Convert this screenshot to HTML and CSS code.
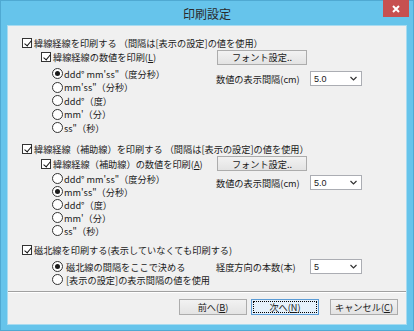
FILE: index.html
```html
<!DOCTYPE html>
<html lang="ja">
<head>
    <meta charset="UTF-8">
    <title>印刷設定</title>
    <link rel="stylesheet" href="styles.css">
</head>
<body>
<div class="window">
    <div class="titlebar">
        <span class="title">印刷設定</span>
        <span class="close">
            <svg width="8" height="8" viewBox="0 0 8 8"><path d="M1 1L7 7M7 1L1 7" stroke="#fff" stroke-width="2"/></svg>
        </span>
    </div>
    <div class="client">
        <!-- 緯線経線 -->
        <div class="group g1">
            <div class="row top"><span class="chk on"></span><span>緯線経線を印刷する （間隔は[表示の設定]の値を使用）</span></div>
            <div class="row sub">
                <div class="sub-label"><span class="chk on"></span><span>緯線経線の数値を印刷(<u>L</u>)</span></div>
                <span class="btn">フォント設定..</span>
            </div>
            <div class="body">
                <div class="radios">
                    <div class="opt"><span class="radio on"></span>ddd° mm'ss"（度分秒）</div>
                    <div class="opt"><span class="radio"></span>mm'ss"（分秒）</div>
                    <div class="opt"><span class="radio"></span>ddd°（度）</div>
                    <div class="opt"><span class="radio"></span>mm'（分）</div>
                    <div class="opt"><span class="radio"></span>ss"（秒）</div>
                </div>
                <div class="field">
                    <span class="field-label">数値の表示間隔(cm)</span>
                    <span class="select">5.0<svg width="7" height="5" viewBox="0 0 7 5"><polyline points="0.5,1 3.5,4 6.5,1" fill="none" stroke="#333" stroke-width="1.2"/></svg></span>
                </div>
            </div>
        </div>
        <!-- 補助線 -->
        <div class="group g2">
            <div class="row top"><span class="chk on"></span><span>緯線経線（補助線）を印刷する （間隔は[表示の設定]の値を使用）</span></div>
            <div class="row sub">
                <div class="sub-label"><span class="chk on"></span><span>緯線経線（補助線）の数値を印刷(<u>A</u>)</span></div>
                <span class="btn">フォント設定..</span>
            </div>
            <div class="body">
                <div class="radios">
                    <div class="opt"><span class="radio"></span>ddd° mm'ss"（度分秒）</div>
                    <div class="opt"><span class="radio on"></span>mm'ss"（分秒）</div>
                    <div class="opt"><span class="radio"></span>ddd°（度）</div>
                    <div class="opt"><span class="radio"></span>mm'（分）</div>
                    <div class="opt"><span class="radio"></span>ss"（秒）</div>
                </div>
                <div class="field">
                    <span class="field-label">数値の表示間隔(cm)</span>
                    <span class="select">5.0<svg width="7" height="5" viewBox="0 0 7 5"><polyline points="0.5,1 3.5,4 6.5,1" fill="none" stroke="#333" stroke-width="1.2"/></svg></span>
                </div>
            </div>
        </div>
        <!-- 磁北線 -->
        <div class="group g3">
            <div class="row top"><span class="chk on"></span><span>磁北線を印刷する(表示していなくても印刷する)</span></div>
            <div class="body">
                <div class="radios">
                    <div class="opt"><span class="radio on"></span>磁北線の間隔をここで決める</div>
                    <div class="opt"><span class="radio"></span>[表示の設定]の表示間隔の値を使用</div>
                </div>
                <div class="field">
                    <span class="field-label">経度方向の本数(本)</span>
                    <span class="select">5<svg width="7" height="5" viewBox="0 0 7 5"><polyline points="0.5,1 3.5,4 6.5,1" fill="none" stroke="#333" stroke-width="1.2"/></svg></span>
                </div>
            </div>
        </div>
        <div class="sep"></div>
        <div class="buttons">
            <span class="btn wide">前へ(<u>B</u>)</span>
            <span class="btn wide default"><span class="focus">次へ(<u>N</u>)</span></span>
            <span class="btn wide cancel">キャンセル(<u>C</u>)</span>
        </div>
    </div>
</div>
</body>
</html>
```

FILE: styles.css
```css
* {
    margin: 0;
    padding: 0;
    box-sizing: border-box;
}

body {
    width: 414px;
    height: 331px;
    overflow: hidden;
    font-family: "Noto Sans CJK JP", sans-serif;
    font-size: 9.2px;
    line-height: 12px;
    color: #1a1a1a;
}

.window {
    width: 414px;
    height: 331px;
    background: #66c4eb;
    border: 1px solid #4fa9d2;
    display: flex;
    flex-direction: column;
}

.titlebar {
    height: 25px;
    display: grid;
    grid-template-columns: 1fr auto 1fr;
}

.title {
    grid-column: 2;
    font-size: 12px;
    line-height: 26px;
    color: #2a2a2a;
}

.close {
    grid-column: 3;
    justify-self: end;
    align-self: start;
    width: 26px;
    height: 17px;
    margin-top: -1px;
    margin-right: 4px;
    background: #c75050;
    display: flex;
    align-items: center;
    justify-content: center;
}

.client {
    margin: 0 7px;
    height: 298px;
    background: #f0f0f0;
    box-shadow: 0 0 0 1px #a8dbf0;
    padding-top: 10px;
}

.row {
    display: flex;
    align-items: center;
}

.top {
    height: 14px;
    padding-left: 14px;
}

.sub {
    height: 14px;
}

.sub-label {
    width: 208px;
    padding-left: 33px;
    display: flex;
    align-items: center;
}

.chk {
    width: 10px;
    height: 10px;
    margin-right: 2px;
    flex: none;
    border: 1px solid #333;
    background: #fff;
    position: relative;
}

.chk.on::after {
    content: "";
    position: absolute;
    left: 2.5px;
    top: 0;
    width: 3px;
    height: 6px;
    border: solid #111;
    border-width: 0 1.6px 1.6px 0;
    transform: rotate(40deg);
}

.btn {
    display: flex;
    align-items: center;
    justify-content: center;
    width: 90px;
    height: 15px;
    margin-left: 1px;
    background: linear-gradient(#f2f2f2, #e3e3e3);
    border: 1px solid #acacac;
}

.body {
    display: flex;
    margin-top: 3px;
}

.radios {
    width: 208px;
    padding-left: 44px;
}

.opt {
    height: 13.5px;
    display: flex;
    align-items: center;
    white-space: nowrap;
}

.radio {
    width: 11px;
    height: 11px;
    margin-right: 1px;
    flex: none;
    border: 1px solid #333;
    border-radius: 50%;
    background: #fff;
    display: flex;
    align-items: center;
    justify-content: center;
}

.radio.on::after {
    content: "";
    width: 5px;
    height: 5px;
    border-radius: 50%;
    background: #1a1a1a;
}

.field {
    display: flex;
    align-items: center;
    height: 15px;
    margin-top: 4px;
}

.field-label {
    width: 94px;
}

.select {
    width: 52px;
    height: 15px;
    flex: none;
    display: flex;
    align-items: center;
    justify-content: space-between;
    padding: 0 4px 0 3px;
    background: #fff;
    border: 1px solid #abadb3;
    font-family: "Liberation Sans", sans-serif;
    font-size: 9px;
}

.g2 {
    margin-top: 7.5px;
}

.g2 .sub {
    height: 15px;
}

.g2 .body {
    margin-top: 1px;
}

.g2 .opt {
    height: 13px;
}

.g2 .field {
    margin-top: 3px;
}

.g3 {
    margin-top: 6px;
}

.g3 .opt {
    height: 13px;
}

.g3 .radio {
    margin-right: 3px;
}

.g3 .field {
    margin-top: 0;
    height: 13px;
}

.sep {
    margin-top: 5px;
    border-top: 1px solid #a0a0a0;
    border-bottom: 1px solid #fff;
}

.buttons {
    display: flex;
    justify-content: flex-end;
    padding: 6px 8px 0 0;
}

.btn.wide {
    width: 68px;
    height: 16px;
    margin-left: 0;
}

.btn.default {
    margin-left: 4px;
    background: #e5f1fb;
    border-color: #5b9bd5;
    padding: 1px;
}

.btn.cancel {
    margin-left: 11px;
}

.focus {
    width: 100%;
    height: 100%;
    display: flex;
    align-items: center;
    justify-content: center;
    border: 1px dotted #000;
}
```
